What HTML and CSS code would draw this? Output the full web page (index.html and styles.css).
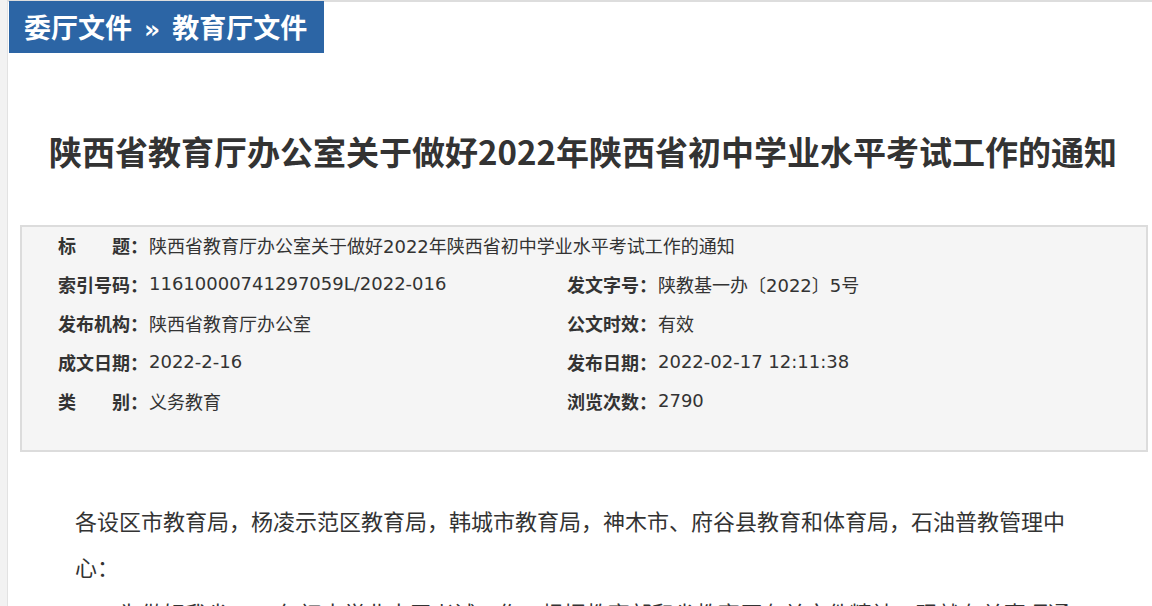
FILE: index.html
```html
<!DOCTYPE html>
<html lang="zh-CN">
<head>
  <meta charset="UTF-8">
  <meta name="viewport" content="width=device-width, initial-scale=1.0">
  <title>陕西省教育厅办公室关于做好2022年陕西省初中学业水平考试工作的通知</title>
  <link rel="stylesheet" href="styles.css">
</head>
<body>
  <div class="page">
    <div class="crumb">委厅文件<span class="sep">»</span>教育厅文件</div>

    <h1 class="title">陕西省教育厅办公室关于做好2022年陕西省初中学业水平考试工作的通知</h1>

    <div class="info">
      <div class="row full">
        <span class="label">标题</span><span class="colon">：</span><span class="value">陕西省教育厅办公室关于做好2022年陕西省初中学业水平考试工作的通知</span>
      </div>
      <div class="row">
        <span class="label">索引号码</span><span class="colon">：</span><span class="value">11610000741297059L/2022-016</span>
      </div>
      <div class="row">
        <span class="label">发文字号</span><span class="colon">：</span><span class="value">陕教基一办〔2022〕5号</span>
      </div>
      <div class="row">
        <span class="label">发布机构</span><span class="colon">：</span><span class="value">陕西省教育厅办公室</span>
      </div>
      <div class="row">
        <span class="label">公文时效</span><span class="colon">：</span><span class="value">有效</span>
      </div>
      <div class="row">
        <span class="label">成文日期</span><span class="colon">：</span><span class="value">2022-2-16</span>
      </div>
      <div class="row">
        <span class="label">发布日期</span><span class="colon">：</span><span class="value">2022-02-17 12:11:38</span>
      </div>
      <div class="row">
        <span class="label">类别</span><span class="colon">：</span><span class="value">义务教育</span>
      </div>
      <div class="row">
        <span class="label">浏览次数</span><span class="colon">：</span><span class="value">2790</span>
      </div>
    </div>

    <div class="content">
      <p>各设区市教育局，杨凌示范区教育局，韩城市教育局，神木市、府谷县教育和体育局，石油普教管理中心：</p>
      <p class="indent">为做好我省2022年初中学业水平考试工作，根据教育部和省教育厅有关文件精神，现就有关事项通知如下：</p>
    </div>
  </div>
</body>
</html>
```

FILE: styles.css
```css
html, body {
  margin: 0;
  padding: 0;
}
body {
  background-color: #f2f2f2;
  color: #333;
  font-family: "DejaVu Sans", "Noto Sans CJK SC", sans-serif;
  overflow: hidden;
}
.page {
  margin-left: 7px;
  background-color: #fff;
  border-left: 1px solid #e2e2e2;
  border-top: 2px solid #dddddd;
  min-height: 620px;
}
.crumb {
  display: inline-block;
  margin-left: 1px;
  margin-top: -1px;
  width: 300px;
  height: 52px;
  line-height: 52px;
  padding-left: 15px;
  background-color: #2c65a5;
  color: #fff;
  font-family: "Noto Sans CJK SC", sans-serif;
  font-size: 27px;
  font-weight: bold;
  vertical-align: top;
}
.crumb .sep {
  font-family: "DejaVu Sans", sans-serif;
  font-size: 25px;
  margin: 0 12px 0 12px;
}
.title {
  margin: 78px 0 0 6px;
  text-align: center;
  font-family: "Noto Sans CJK SC", sans-serif;
  font-size: 33px;
  line-height: 40px;
  font-weight: bold;
  color: #333;
}
.info {
  margin: 54px 4px 0 12px;
  padding: 0 0 28px 36px;
  background-color: #f5f5f5;
  border: 2px solid #dcdcdc;
  display: grid;
  grid-template-columns: 509px 1fr;
  font-size: 18px;
}
.row {
  display: flex;
  height: 39px;
  align-items: center;
  white-space: nowrap;
  padding-bottom: 4px;
  box-sizing: border-box;
}
.row.full {
  grid-column: 1 / 3;
}
.label {
  width: 72px;
  font-weight: bold;
  text-align: justify;
  text-align-last: justify;
  font-family: "Noto Sans CJK SC", sans-serif;
}
.colon {
  width: 18px;
  font-weight: bold;
  font-family: "Noto Sans CJK SC", sans-serif;
}
.value {
  padding-left: 1px;
}
.content {
  padding: 45px 76px 0 67px;
  font-family: "Noto Sans CJK SC", sans-serif;
  font-size: 22px;
  line-height: 46px;
  color: #333;
}
.content p {
  margin: 0;
}
.content .indent {
  text-indent: 2em;
}
```
